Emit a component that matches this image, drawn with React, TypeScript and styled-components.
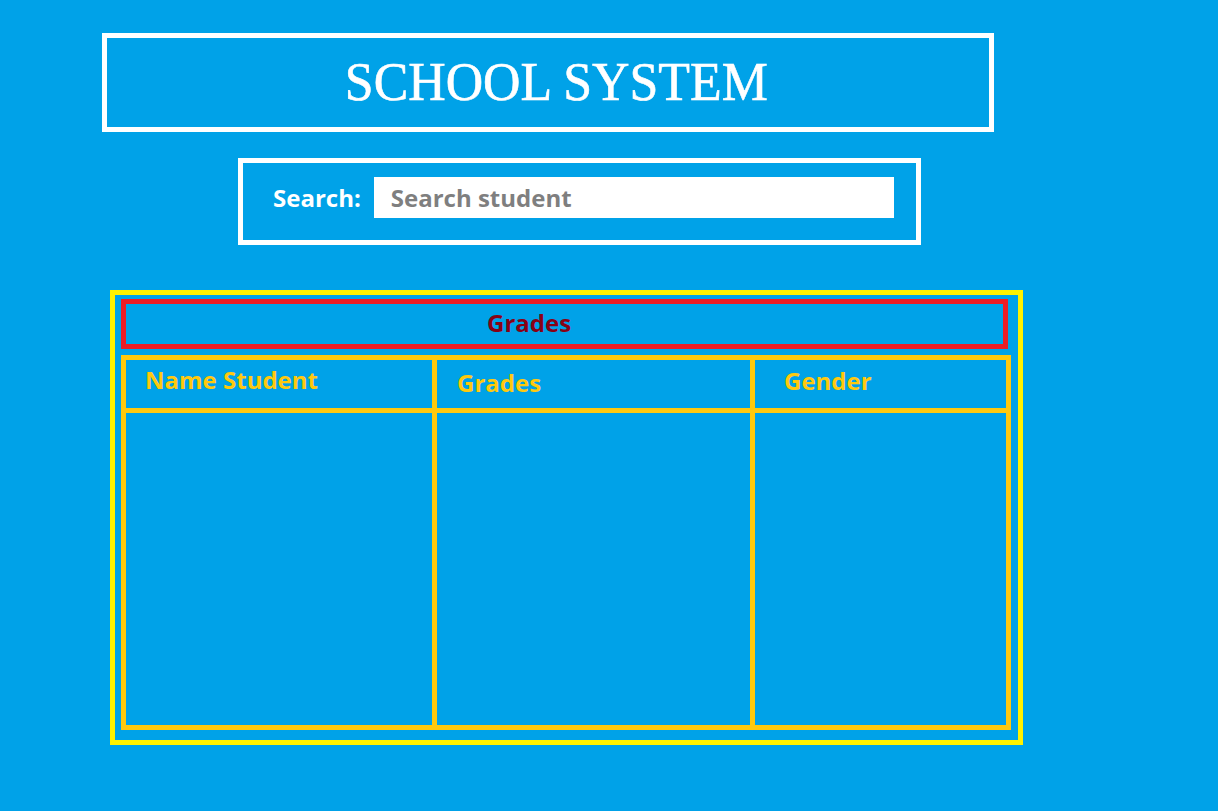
import styled, { createGlobalStyle } from "styled-components";

const GlobalStyle = createGlobalStyle`
  html, body {
    margin: 0;
    padding: 0;
    background: #00a2e8;
  }
  * { box-sizing: border-box; }
`;

const Page = styled.div`
  width: 1218px;
  height: 811px;
  padding-top: 33px;
  background: #00a2e8;
  font-family: "Open Sans", "Noto Sans", sans-serif;
`;

const TitleBox = styled.header`
  margin-left: 102px;
  width: 892px;
  height: 99px;
  border: 5px solid #ffffff;
  display: flex;
  align-items: center;
  justify-content: center;
`;

const Title = styled.h1`
  margin: 0;
  font-family: "Liberation Serif", "DejaVu Serif", serif;
  font-weight: normal;
  font-size: 54px;
  color: #ffffff;
  transform: translate(8px, -1px) scaleX(0.96);
  -webkit-text-stroke: 0.6px #ffffff;
`;

const SearchBox = styled.form`
  margin-top: 26px;
  margin-left: 238px;
  width: 683px;
  height: 87px;
  border: 5px solid #ffffff;
  display: flex;
  align-items: center;
  gap: 13px;
  padding-left: 30px;
  padding-bottom: 8px;
`;

const Label = styled.label`
  color: #ffffff;
  font-weight: 700;
  font-size: 24px;
`;

const SearchInput = styled.input`
  width: 520px;
  height: 41px;
  border: none;
  outline: none;
  background: #ffffff;
  padding: 0 0 0 17px;
  font-family: "Open Sans", "Noto Sans", sans-serif;
  font-weight: 700;
  font-size: 24px;
  color: #333;

  &::placeholder {
    color: #7f7f7f;
  }
`;

const Frame = styled.section`
  margin-top: 45px;
  margin-left: 110px;
  width: 913px;
  height: 455px;
  border: 5px solid #fff200;
  padding: 4px 0 0 6px;
`;

const Caption = styled.div`
  width: 887px;
  height: 50px;
  border: 5px solid #ed1c24;
  display: flex;
  align-items: center;
  padding-left: 361px;
  padding-bottom: 4px;
  color: #880015;
  font-weight: 700;
  font-size: 24px;
`;

const Table = styled.div`
  margin-top: 6px;
  width: 890px;
  height: 375px;
  border: 5px solid #ffc90e;
  background: #ffc90e;
  display: grid;
  grid-template-columns: 306px 313px 251px;
  grid-template-rows: 48px 1fr;
  column-gap: 5px;
  row-gap: 5px;
`;

const HeadCell = styled.div<{ $left: number; $shift: number }>`
  background: #00a2e8;
  display: flex;
  align-items: center;
  padding-left: ${(p) => p.$left}px;
  color: #ffc90e;
  font-weight: 700;
  font-size: 24px;
  & > span {
    transform: translateY(${(p) => p.$shift}px);
  }
`;

const BodyCell = styled.div`
  background: #00a2e8;
`;

const columns = [
  { title: "Name Student", left: 19, shift: -5 },
  { title: "Grades", left: 20, shift: -2 },
  { title: "Gender", left: 29, shift: -4 },
];

export default function App() {
  return (
    <Page>
      <GlobalStyle />
      <TitleBox>
        <Title>SCHOOL SYSTEM</Title>
      </TitleBox>
      <SearchBox onSubmit={(e) => e.preventDefault()}>
        <Label htmlFor="search">Search:</Label>
        <SearchInput id="search" placeholder="Search student" autoComplete="off" />
      </SearchBox>
      <Frame>
        <Caption>Grades</Caption>
        <Table>
          {columns.map((c) => (
            <HeadCell key={c.title} $left={c.left} $shift={c.shift}>
              <span>{c.title}</span>
            </HeadCell>
          ))}
          {columns.map((c) => (
            <BodyCell key={c.title + "-body"} />
          ))}
        </Table>
      </Frame>
    </Page>
  );
}
